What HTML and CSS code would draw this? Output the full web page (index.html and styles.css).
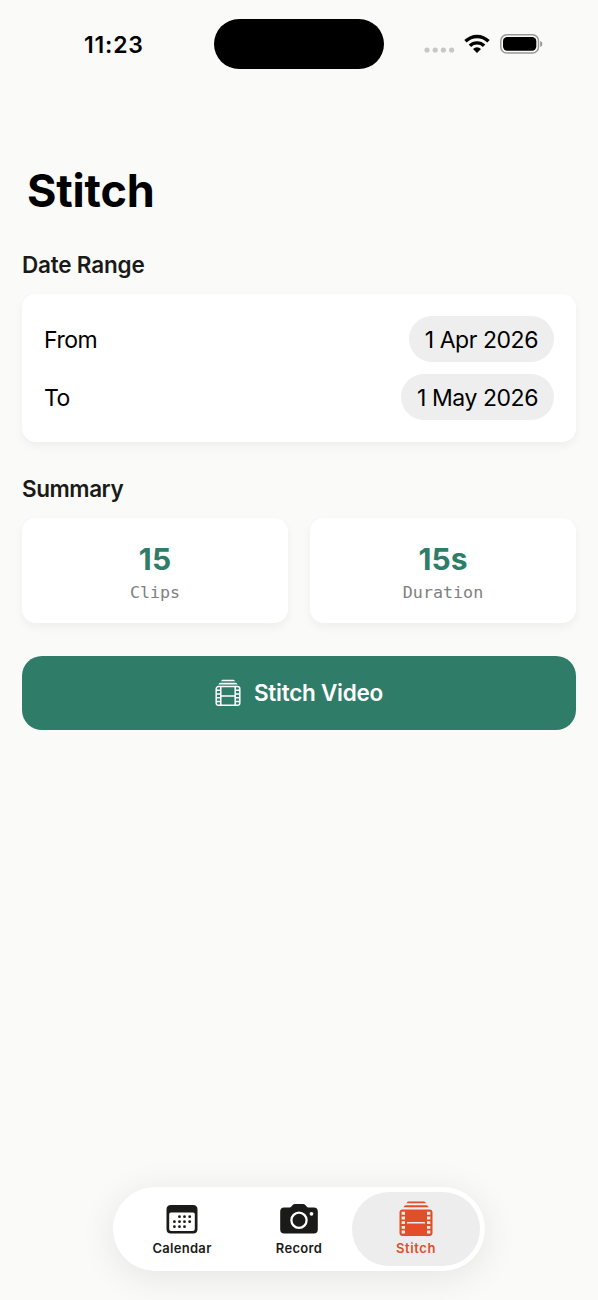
FILE: index.html
```html
<!DOCTYPE html>
<html lang="en">
<head>
<meta charset="utf-8">
<title>Stitch</title>
<link rel="stylesheet" href="styles.css">
</head>
<body>
<svg class="defs" width="0" height="0" aria-hidden="true">
  <symbol id="film-solid" viewBox="0 0 34 36">
    <path d="M7.500 2.200 Q8 .4 9.400 .4 H25 Q26.400 .4 27 2.200 Z M4.600 6.200 Q5.200 4.200 7 4.200 H27.300 Q29 4.200 29.600 6.200 Z"/>
    <path fill-rule="evenodd" d="M3.500 8.500 H30.500 Q33.500 8.500 33.500 11.500 V32 Q33.500 35 30.500 35 H3.500 Q.5 35 .5 32 V11.500 Q.5 8.500 3.500 8.500 Z M2.600 10.800 V13.700 H6 V10.800 Z M2.600 15.500 V18.400 H6 V15.500 Z M2.600 20.200 V23.100 H6 V20.200 Z M2.600 24.900 V27.800 H6 V24.900 Z M2.600 29.600 V32.500 H6 V29.600 Z M28 10.800 V13.700 H31.400 V10.800 Z M28 15.500 V18.400 H31.400 V15.500 Z M28 20.200 V23.100 H31.400 V20.200 Z M28 24.900 V27.800 H31.400 V24.900 Z M28 29.600 V32.500 H31.400 V29.600 Z M8 20.900 V22.400 H26 V20.900 Z"/>
  </symbol>
</svg>
<div class="screen">
  <header class="status">
    <div class="time">11:23</div>
    <div class="island"></div>
    <div class="indicators">
      <svg class="dots" width="32" height="6" viewBox="0 0 32 6" fill="#c7c7c5"><circle cx="3" cy="3" r="2.600"/><circle cx="11.200" cy="3" r="2.600"/><circle cx="19.400" cy="3" r="2.600"/><circle cx="27.600" cy="3" r="2.600"/></svg>
      <svg class="wifi" width="26" height="20" viewBox="0 0 26 20"><path d="M.3 6.100 A18 18 0 0 1 25.700 6.100 L23.300 8.600 A14.600 14.600 0 0 0 2.700 8.600 Z M4.700 10.600 A11.800 11.800 0 0 1 21.300 10.600 L18.900 13 A8.400 8.400 0 0 0 7.100 13 Z M9 15 A5.700 5.700 0 0 1 17 15 L13 19.100 Z"/></svg>
      <svg class="battery" width="43" height="20" viewBox="0 0 43 20"><rect x=".8" y=".8" width="37.700" height="18.200" rx="6" fill="none" stroke="#999" stroke-width="1.500"/><rect x="3" y="3" width="33.300" height="13.800" rx="4.200"/><path d="M40.200 7 Q42.400 7.600 42.400 10 T40.200 13 Z" fill="#999"/></svg>
    </div>
  </header>
  <main class="content">
    <h1 class="title">Stitch</h1>
    <h2 class="heading">Date Range</h2>
    <section class="card dates">
      <div class="row"><span class="name">From</span><span class="pill">1 Apr 2026</span></div>
      <div class="row"><span class="name">To</span><span class="pill">1 May 2026</span></div>
    </section>
    <h2 class="heading summary">Summary</h2>
    <section class="stats">
      <div class="card stat"><div class="value">15</div><div class="label">Clips</div></div>
      <div class="card stat"><div class="value">15s</div><div class="label">Duration</div></div>
    </section>
    <button class="action">
      <svg width="26" height="28" viewBox="0 0 26 28" fill="none" stroke="#fff" stroke-width="1.500">
        <path d="M6 2.200 Q6.400 .7 7.500 .7 H18.500 Q19.600 .7 20 2.200 Z M3.500 5.500 Q4 3.800 5.200 3.800 H20.800 Q22 3.800 22.500 5.500 Z" stroke="none" fill="#fff"/>
        <rect x="1.200" y="7.600" width="23.600" height="18.600" rx="2.300"/>
        <path d="M5.800 7.600 V26.200 M20.200 7.600 V26.200 M5.800 16.900 H20.200 M1.200 11.300 H5.800 M1.200 15 H5.800 M1.200 18.700 H5.800 M1.200 22.400 H5.800 M20.200 11.300 H24.800 M20.200 15 H24.800 M20.200 18.700 H24.800 M20.200 22.400 H24.800"/>
      </svg>
      <span class="action-text">Stitch Video</span>
    </button>
  </main>
  <nav class="tabs">
    <div class="tab">
      <svg width="32" height="36" viewBox="0 0 32 36"><path fill-rule="evenodd" d="M5 4 H27 Q31.500 4 31.500 8.500 V28 Q31.500 32.500 27 32.500 H5 Q.5 32.500 .5 28 V8.500 Q.5 4 5 4 Z M3.200 13 V28 Q3.200 30.100 5.300 30.100 H26.700 Q28.800 30.100 28.800 28 V13 Q28.800 11.400 27 11.400 H5 Q3.200 11.400 3.200 13 Z"/><g><circle cx="13.500" cy="15.700" r="1.400"/><circle cx="18.500" cy="15.700" r="1.400"/><circle cx="23.700" cy="15.700" r="1.400"/><circle cx="8.400" cy="20.700" r="1.400"/><circle cx="13.500" cy="20.700" r="1.400"/><circle cx="18.500" cy="20.700" r="1.400"/><circle cx="23.700" cy="20.700" r="1.400"/><circle cx="8.400" cy="25.700" r="1.400"/><circle cx="13.500" cy="25.700" r="1.400"/><circle cx="18.500" cy="25.700" r="1.400"/></g></svg>
      <span class="tab-label">Calendar</span>
    </div>
    <div class="tab">
      <svg width="38" height="36" viewBox="0 0 38 36"><path d="M4.200 6.500 H9.500 Q10.700 6.500 11.400 5.600 L12.700 4 Q13.600 3 15 3 H23 Q24.400 3 25.300 4 L26.600 5.600 Q27.300 6.500 28.500 6.500 H33.800 Q37.800 6.500 37.800 10.500 V28.500 Q37.800 32.500 33.800 32.500 H4.200 Q.2 32.500 .2 28.500 V10.500 Q.2 6.500 4.200 6.500 Z"/><circle cx="19" cy="19.300" r="7.600" fill="none" stroke="#fff" stroke-width="2.300"/><circle cx="31.500" cy="12.800" r="1.900" fill="#fff"/></svg>
      <span class="tab-label">Record</span>
    </div>
    <div class="tab selected">
      <svg width="34" height="36"><use href="#film-solid"/></svg>
      <span class="tab-label">Stitch</span>
    </div>
  </nav>
</div>
</body>
</html>
```
FILE: styles.css
```css
* { box-sizing: border-box; }
body { margin: 0; background: #fafaf8; font-family: Inter, "Liberation Sans", sans-serif; color: #000; }
.defs { display: none; }
.screen { width: 598px; height: 1300px; display: flex; flex-direction: column; overflow: hidden; }
svg { display: block; flex: none; }

.status { height: 88px; display: grid; grid-template-columns: 214px 170px 214px; align-items: center; }
.time { padding: 1px 0 0 84px; font-size: 23px; line-height: 28px; font-weight: 600; letter-spacing: .8px; white-space: nowrap; }
.island { height: 50px; border-radius: 25px; background: #000; }
.indicators { display: flex; align-items: center; padding-left: 40px; }
.dots { margin-top: 12px; }
.wifi { margin-left: 8px; }
.battery { margin-left: 10px; }

.content { flex: 1; padding: 77px 22px 0; }
.title { margin: 0; padding-left: 5px; font-size: 45px; line-height: 52px; font-weight: 700; letter-spacing: -.2px; }
.heading { margin: 34px 0 0; font-size: 22.500px; line-height: 28px; font-weight: 600; letter-spacing: -.2px; color: #1a1a18; }
.card { background: #fff; border-radius: 14px; box-shadow: 0 4px 10px rgba(0, 0, 0, .05); }
.dates { margin-top: 15px; height: 148px; padding: 22px; display: flex; flex-direction: column; gap: 12px; }
.row { display: flex; justify-content: space-between; align-items: center; height: 46px; font-size: 23px; letter-spacing: -.45px; }
.name { padding-top: 2px; }
.pill { height: 46px; border-radius: 23px; padding: 1px 16px 0; line-height: 46px; background: #eeeeef; white-space: nowrap; }
.summary { margin-top: 33px; letter-spacing: -.45px; }
.stats { margin-top: 15px; display: grid; grid-template-columns: 1fr 1fr; gap: 22px; }
.stat { height: 105px; padding-top: 23px; text-align: center; }
.value { font-size: 30px; line-height: 36px; font-weight: 700; letter-spacing: .1px; color: #2d7d68; }
.label { margin-top: 4px; font: 16.700px/22px "DejaVu Sans Mono", monospace; color: #808080; }
.action { margin-top: 33px; width: 100%; height: 74px; padding: 0; border: 0; border-radius: 20px; background: #2f7d69; color: #fff; display: flex; align-items: center; justify-content: center; gap: 13px; font: 600 22.500px/28px Inter, sans-serif; letter-spacing: -.25px; }

.tabs { width: 372px; height: 84px; margin: 0 auto 29px; border-radius: 42px; background: #fff; padding: 5px; display: flex; justify-content: space-between; box-shadow: 0 6px 36px rgba(0, 0, 0, .09); }
.tab { width: 128px; height: 74px; border-radius: 37px; display: flex; flex-direction: column; align-items: center; padding-top: 9px; color: #1a1a18; fill: currentColor; }
.tab + .tab { margin-left: -11px; }
.selected { background: #ecedec; color: #e04f29; }
.tab-label { margin-top: 3px; font-size: 13px; line-height: 16px; font-weight: 600; letter-spacing: .3px; }
.selected .tab-label { letter-spacing: .6px; }
```
